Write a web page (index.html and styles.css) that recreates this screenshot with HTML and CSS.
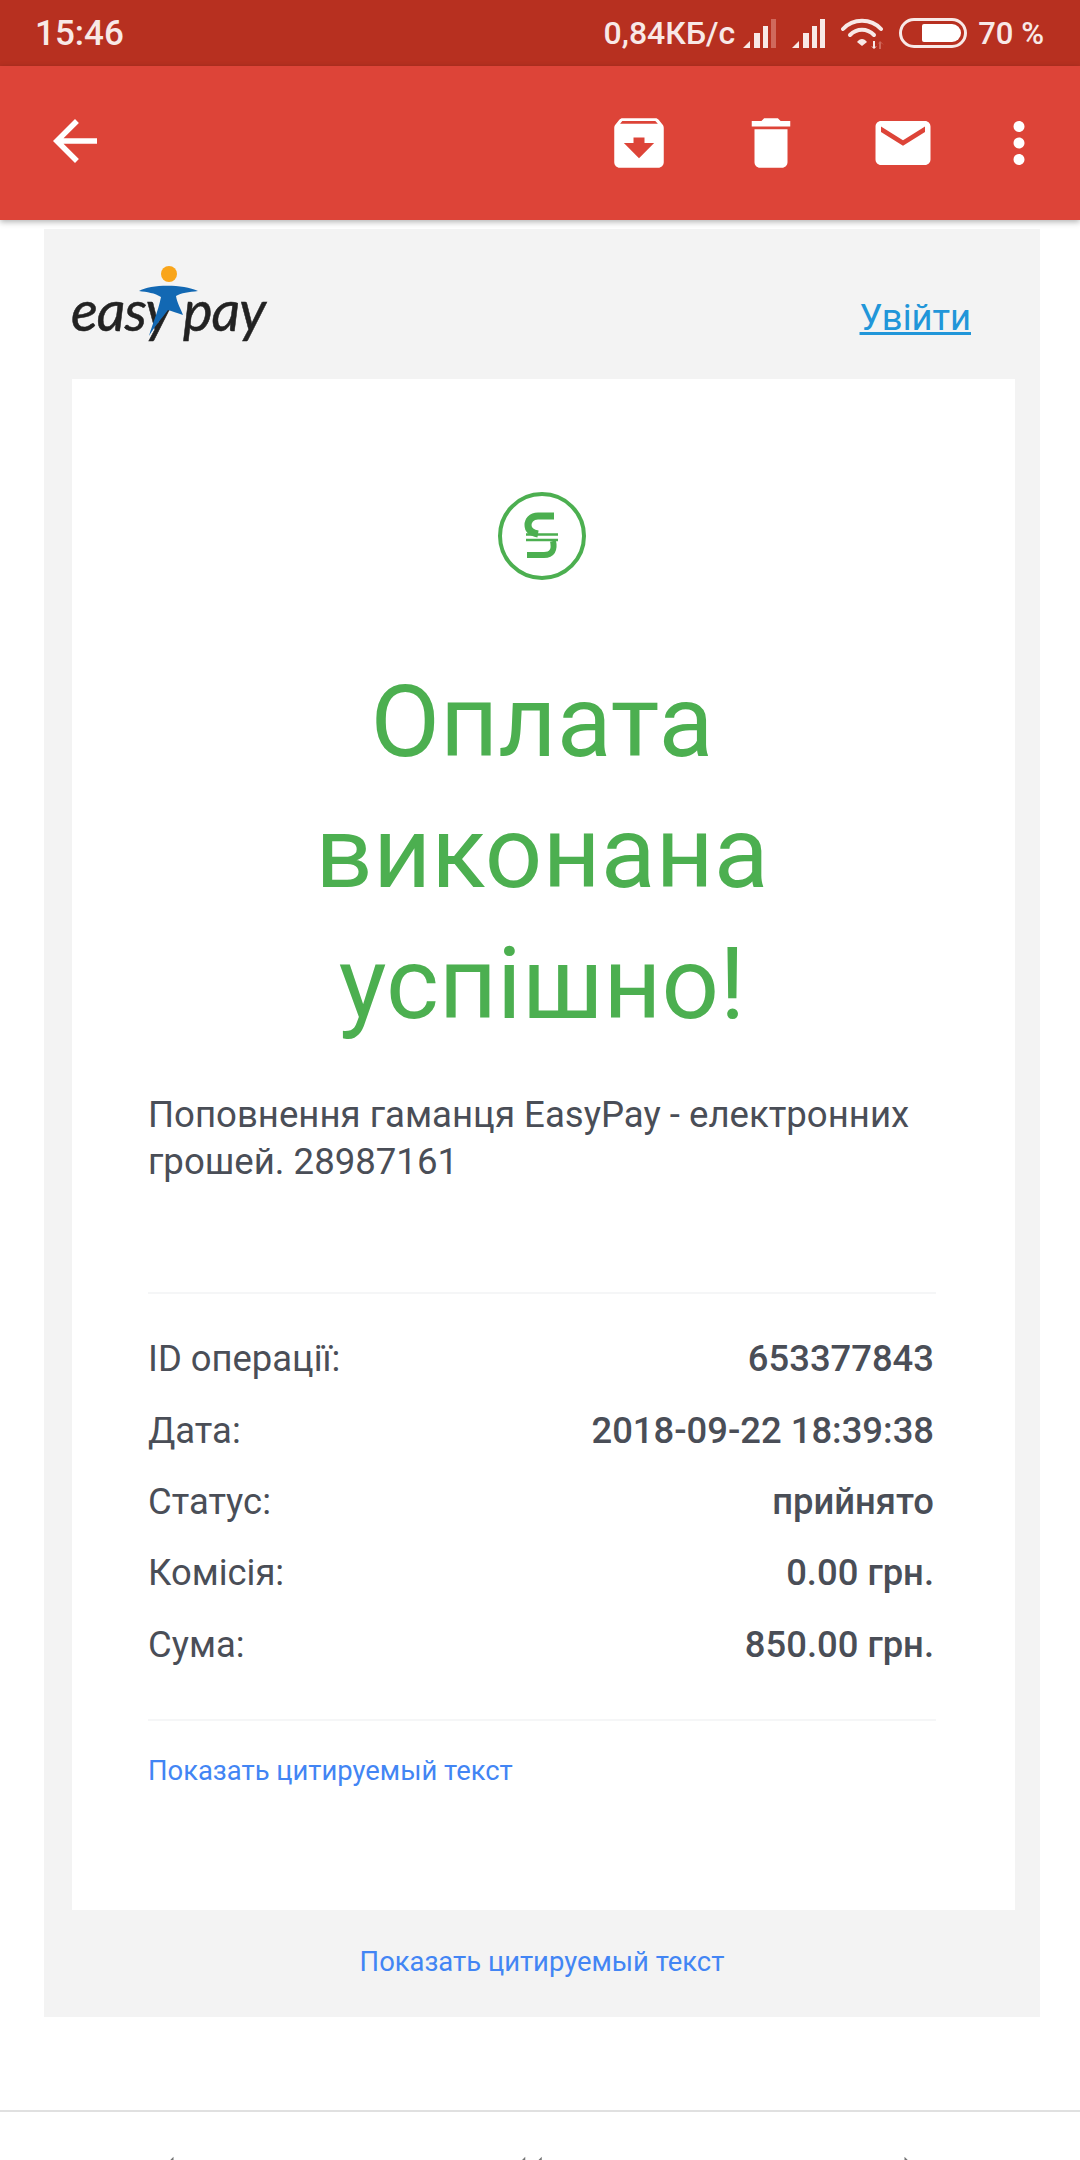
FILE: index.html
```html
<!DOCTYPE html>
<html lang="en">
<head>
    <meta charset="UTF-8">
    <meta name="viewport" content="width=device-width, initial-scale=1.0">
    <title>Оплата виконана успішно</title>
    <link rel="stylesheet" href="styles.css">
</head>
<body>
    <div class="status-bar">
        <span class="clock">15:46</span>
        <div class="status-right">
            <span class="speed">0,84КБ/с</span>
            <svg class="signal" width="34" height="30" viewBox="0 0 34 30">
                <path d="M0 29 7 22V29Z"/><rect x="11" y="14" width="6" height="15"/><rect x="20" y="7" width="5" height="22"/>
                <rect class="dim" x="28" y="0" width="5" height="29"/>
            </svg>
            <svg class="signal second" width="34" height="30" viewBox="0 0 34 30">
                <path d="M0 29 7 22V29Z"/><rect x="11" y="14" width="6" height="15"/><rect x="20" y="7" width="5" height="22"/>
                <rect x="28" y="0" width="5" height="29"/>
            </svg>
            <svg class="wifi" width="46" height="32" viewBox="0 0 46 32">
                <path class="arc" d="M2 12C12 1 30 1 40 12"/>
                <path class="arc" d="M9 18C16 11 26 11 33 18"/>
                <path d="M16 25C19 21 23 21 26 25L21 29Z"/>
                <path d="M32 24h2v6l2-1-3 3-3-3 2 1Z"/>
                <path class="dim" d="M38 32h2v-6l3 2-4-4-3 4 2-2Z"/>
            </svg>
            <div class="battery"><div class="battery-fill"></div></div>
            <span class="percent">70 %</span>
        </div>
    </div>

    <div class="toolbar">
        <svg class="icon back" viewBox="0 0 24 24"><path d="M20 11H7.83l5.59-5.59L12 4l-8 8 8 8 1.41-1.41L7.83 13H20v-2z"/></svg>
        <div class="toolbar-actions">
            <svg class="icon" viewBox="0 0 24 24"><path d="M20.54 5.23l-1.39-1.68C18.88 3.21 18.47 3 18 3H6c-.47 0-.88.21-1.16.55L3.46 5.23C3.17 5.57 3 6.02 3 6.5V19c0 1.1.9 2 2 2h14c1.1 0 2-.9 2-2V6.5c0-.48-.17-.93-.46-1.27zM12 17.5L6.5 12H10v-2h4v2h3.5L12 17.5zM5.12 5l.81-1h12l.94 1H5.12z"/></svg>
            <svg class="icon" viewBox="0 0 24 24"><path d="M6 19c0 1.1.9 2 2 2h8c1.1 0 2-.9 2-2V7H6v12zM19 4h-3.5l-1-1h-5l-1 1H5v2h14V4z"/></svg>
            <svg class="icon" viewBox="0 0 24 24"><path d="M20 4H4c-1.1 0-1.99.9-1.99 2L2 18c0 1.1.9 2 2 2h16c1.1 0 2-.9 2-2V6c0-1.1-.9-2-2-2zm0 4l-8 5-8-5V6l8 5 8-5v2z"/></svg>
            <svg class="icon more" viewBox="0 0 24 24"><path d="M12 8c1.1 0 2-.9 2-2s-.9-2-2-2-2 .9-2 2 .9 2 2 2zm0 2c-1.1 0-2 .9-2 2s.9 2 2 2 2-.9 2-2-.9-2-2-2zm0 6c-1.1 0-2 .9-2 2s.9 2 2 2 2-.9 2-2-.9-2-2-2z"/></svg>
        </div>
    </div>

    <div class="mail-card">
        <div class="mail-header">
            <div class="logo">
                <span class="logo-word">easy</span>
                <span class="logo-word pay">pay</span>
                <svg class="logo-man" width="70" height="72" viewBox="0 0 70 72">
                    <circle cx="38" cy="9" r="8" fill="#f9a51a"/>
                    <path fill="#1268b3" d="M8 26C20 19 52 19 67 26 58 27 50 28 45 31 46 38 50 44 52 50 46 48 41 46 37 45 30 54 22 64 18 71 21 60 27 47 30 32 24 28 16 27 8 26Z"/>
                </svg>
            </div>
            <a class="login" href="#">Увійти</a>
        </div>

        <div class="mail-body">
            <svg class="paid-icon" width="90" height="90" viewBox="0 0 90 90">
                <circle cx="45" cy="45" r="42" fill="none" stroke="#4caf50" stroke-width="4"/>
                <g fill="none" stroke="#4caf50">
                    <path stroke-width="7" d="M57 25H41C34 25 31 30 31 34C31 39 35 42 41 43"/>
                    <path stroke-width="2.5" d="M29 43.5H61M29 49H61"/>
                    <path stroke-width="6" d="M56 50C58 59 55 64 47 64H30"/>
                </g>
            </svg>
            <h1 class="title">Оплата виконана успішно!</h1>
            <p class="description">Поповнення гаманця EasyPay - електронних грошей. 28987161</p>

            <div class="details">
                <div class="detail-row"><span>ID операції:</span><b>653377843</b></div>
                <div class="detail-row"><span>Дата:</span><b>2018-09-22 18:39:38</b></div>
                <div class="detail-row"><span>Статус:</span><b>прийнято</b></div>
                <div class="detail-row"><span>Комісія:</span><b>0.00 грн.</b></div>
                <div class="detail-row"><span>Сума:</span><b>850.00 грн.</b></div>
            </div>

            <a class="quoted" href="#">Показать цитируемый текст</a>
        </div>

        <div class="mail-footer">
            <a class="quoted" href="#">Показать цитируемый текст</a>
        </div>
    </div>

    <div class="reply-bar">
        <svg class="reply-icon" viewBox="0 0 24 24"><path d="M10 9V5l-7 7 7 7v-4.1c5 0 8.5 1.6 11 5.1-1-5-4-10-11-11z"/></svg>
        <svg class="reply-icon" viewBox="0 0 24 24"><path d="M7 8V5l-7 7 7 7v-3l-4-4 4-4zm6 1V5l-7 7 7 7v-4.1c5 0 8.5 1.6 11 5.1-1-5-4-10-11-11z"/></svg>
        <svg class="reply-icon" viewBox="0 0 24 24"><path d="M14 9V5l7 7-7 7v-4.1c-5 0-8.5 1.6-11 5.1 1-5 4-10 11-11z"/></svg>
    </div>
</body>
</html>
```

FILE: styles.css
```css
html, body {
    margin: 0;
    padding: 0;
}
body {
    width: 1080px;
    height: 2160px;
    overflow: hidden;
    background-color: #fff;
    font-family: Roboto, "Noto Sans", sans-serif;
}

/* status bar */
.status-bar {
    height: 66px;
    background-color: #b73020;
    color: #f8e9e7;
    display: flex;
    align-items: center;
    justify-content: space-between;
    padding: 0 36px 0 35px;
    box-sizing: border-box;
    font-size: 32px;
    font-weight: 500;
}
.clock {
    font-size: 35px;
}
.status-right {
    display: flex;
    align-items: center;
}
.speed {
    margin-right: 8px;
}
.signal {
    fill: #f8e9e7;
    margin-top: 2px;
}
.signal .dim, .wifi .dim {
    fill: #d0695c;
}
.signal.second {
    margin-left: 15px;
}
.wifi {
    fill: #f8e9e7;
    margin-left: 15px;
}
.wifi .arc {
    fill: none;
    stroke: #f8e9e7;
    stroke-width: 4;
    stroke-linecap: round;
}
.battery {
    width: 68px;
    height: 30px;
    margin-left: 12px;
    box-sizing: border-box;
    border: 3px solid #f8e9e7;
    border-radius: 15px;
    padding: 3px 3px 3px 20px;
}
.battery-fill {
    height: 100%;
    background-color: #fff;
    border-radius: 2px 9px 9px 2px;
}
.percent {
    margin-left: 11px;
    font-size: 31px;
}

/* toolbar */
.toolbar {
    height: 154px;
    background-color: #dd4438;
    display: flex;
    justify-content: space-between;
    align-items: center;
    padding: 0 28px 0 42px;
    box-shadow: 0 2px 6px rgba(0, 0, 0, 0.3);
    position: relative;
}
.toolbar-actions {
    display: flex;
    gap: 66px;
}
.icon {
    width: 66px;
    height: 66px;
    fill: #fff;
    display: block;
}
.back {
    margin-top: -4px;
}
.more {
    margin-left: -16px;
}

/* mail */
.mail-card {
    width: 996px;
    margin: 9px 0 0 44px;
    padding: 0 25px 0 28px;
    box-sizing: border-box;
    background-color: #f3f3f3;
}
.mail-header {
    height: 150px;
    display: flex;
    align-items: center;
    justify-content: space-between;
    padding-right: 44px;
}
.logo {
    position: relative;
    width: 200px;
    height: 150px;
    margin-left: -1px;
    font-family: Lato, "Liberation Sans", sans-serif;
    font-style: italic;
    font-size: 56px;
    color: #222;
    -webkit-text-stroke: 0.5px #222;
    filter: blur(0.4px);
}
.logo-word {
    position: absolute;
    left: 0;
    top: 47px;
    letter-spacing: -1px;
}
.logo-word.pay {
    left: 112px;
}
.logo-man {
    position: absolute;
    left: 60px;
    top: 36px;
}
.login {
    color: #2196d9;
    font-size: 36.4px;
    margin-top: 26px;
}
.mail-body {
    background-color: #fff;
    height: 1531px;
    box-sizing: border-box;
    padding: 112px 79px 0 76px;
}
.paid-icon {
    display: block;
    margin: 0 auto;
}
.title {
    margin: 75px 0 0;
    font-size: 101px;
    line-height: 131px;
    font-weight: 400;
    color: #4caf50;
    text-align: center;
    padding: 0 100px;
}
.description {
    margin: 42px 0 0;
    font-size: 36.6px;
    line-height: 47px;
    color: #4a4e57;
}
.details {
    margin-top: 107px;
    padding: 29px 0 39px;
    border-top: 2px solid #f5f6f7;
    border-bottom: 2px solid #f5f6f7;
    color: #4a4e57;
    font-size: 36.4px;
}
.detail-row {
    height: 71.4px;
    display: flex;
    align-items: center;
    justify-content: space-between;
}
.detail-row b {
    font-weight: 500;
    margin-right: 2px;
}
.quoted {
    color: #4285f4;
    font-size: 27.4px;
    text-decoration: none;
}
.mail-body .quoted {
    display: block;
    margin-top: 34px;
}
.mail-footer {
    height: 107px;
    box-sizing: border-box;
    padding: 0 3px 4px 0;
    display: flex;
    align-items: center;
    justify-content: center;
}

/* reply bar */
.reply-bar {
    position: relative;
    margin-top: 93px;
    border-top: 2px solid #e0e0e0;
    display: grid;
    grid-template-columns: repeat(3, 360px);
    justify-items: center;
    padding-top: 31px;
}
.reply-icon {
    width: 66px;
    height: 66px;
    fill: #757575;
    margin-left: -3px;
}
```
